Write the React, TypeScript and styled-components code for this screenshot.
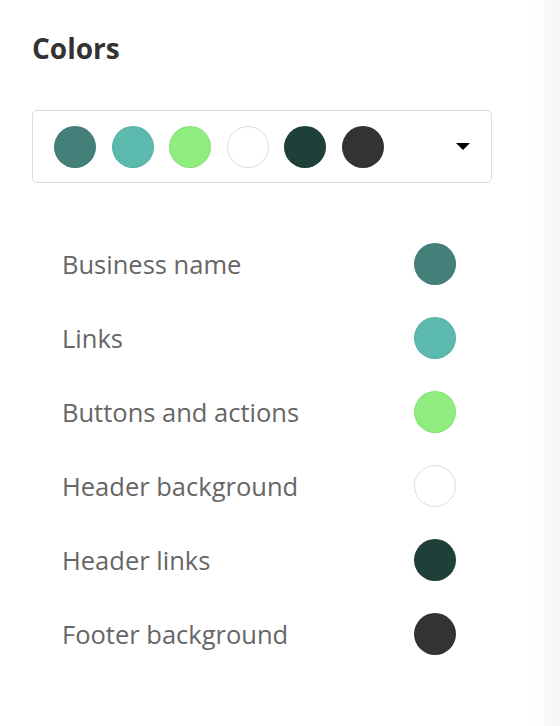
import React from 'react';
import styled, { createGlobalStyle } from 'styled-components';

const palette = ['#44807a', '#5cb9ae', '#8fec7e', '#ffffff', '#1f4039', '#333333'];

const items = [
    { label: 'Business name', color: '#44807a' },
    { label: 'Links', color: '#5cb9ae' },
    { label: 'Buttons and actions', color: '#8fec7e' },
    { label: 'Header background', color: '#ffffff' },
    { label: 'Header links', color: '#1f4039' },
    { label: 'Footer background', color: '#333333' },
];

const App = (): React.ReactElement => {
    return (
        <>
            <GlobalStyle />
            <Panel>
                <Title>Colors</Title>
                <Picker>
                    <Swatches>
                        {palette.map((c) => (
                            <Swatch key={c} $color={c} />
                        ))}
                    </Swatches>
                    <Caret />
                </Picker>
                <List>
                    {items.map((item) => (
                        <Row key={item.label}>
                            <Label>{item.label}</Label>
                            <Swatch $color={item.color} />
                        </Row>
                    ))}
                </List>
            </Panel>
        </>
    );
};

export default App;

const GlobalStyle = createGlobalStyle`
    html, body {
        margin: 0;
        padding: 0;
        height: 100%;
        background: linear-gradient(to right, #ffffff 0, #ffffff 532px, #f6f6f6 560px);
    }
    body {
        font-family: "Open Sans", "Noto Sans", sans-serif;
    }
`;

const Panel = styled.section`
    display: flex;
    flex-direction: column;
    padding: 30px 0 0 32px;
    width: 460px;
`;

const Title = styled.h2`
    margin: 0;
    font-size: 28px;
    line-height: 36px;
    font-weight: 700;
    color: #333;
`;

const Picker = styled.div`
    margin-top: 44px;
    height: 73px;
    box-sizing: border-box;
    border: 1px solid #dcdcdc;
    border-radius: 5px;
    display: flex;
    align-items: center;
    justify-content: space-between;
    padding: 0 21px 0 21px;
`;

const Swatches = styled.div`
    display: flex;
    gap: 15.5px;
`;

const Swatch = styled.span<{ $color: string }>`
    display: block;
    width: 42px;
    height: 42px;
    box-sizing: border-box;
    border-radius: 50%;
    background: ${(p) => p.$color};
    border: 1px solid ${(p) => (p.$color === '#ffffff' ? '#dddddd' : 'rgba(0,0,0,0.06)')};
`;

const Caret = styled.span`
    width: 0;
    height: 0;
    border-left: 7px solid transparent;
    border-right: 7px solid transparent;
    border-top: 7px solid #000;
`;

const List = styled.div`
    display: flex;
    flex-direction: column;
    gap: 32px;
    margin-top: 60px;
    padding: 0 36px 0 30px;
`;

const Row = styled.div`
    display: flex;
    align-items: center;
    justify-content: space-between;
`;

const Label = styled.span`
    font-size: 25.5px;
    line-height: 34px;
    color: #666;
`;
